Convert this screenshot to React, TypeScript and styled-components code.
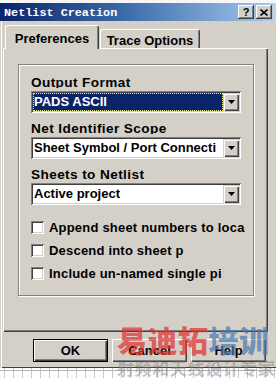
import React from "react";
import styled, { createGlobalStyle, css } from "styled-components";

const FACE = "#d4d0c8";
const SHADOW = "#808080";
const DARK = "#404040";
const UI_FONT = `"Liberation Sans", Arial, sans-serif`;

const GlobalStyle = createGlobalStyle`
  html, body { margin: 0; padding: 0; }
  body { background: #fff; font-family: ${UI_FONT}; }
`;

const Screen = styled.div`
  position: relative;
  width: 276px;
  height: 378px;
  overflow: hidden;
  display: flex;
  flex-direction: column;
  background: #fafafa;
`;

const TopStrip = styled.div`
  height: 3px;
  background: #f6f6f6;
`;

const Window = styled.div`
  height: 365px;
  display: flex;
  flex-direction: column;
  background: ${FACE};
  box-shadow: inset 0 -1px 0 ${DARK};
`;

const TitleBar = styled.div`
  height: 18px;
  margin-right: 3px;
  padding: 0 1px 0 4px;
  display: flex;
  align-items: center;
  background: linear-gradient(to right, #0a246a 0%, #3a6aa8 45%, #a6caf0 100%);
`;

const TitleText = styled.span`
  font-family: "Liberation Mono", "DejaVu Sans Mono", monospace;
  font-weight: bold;
  font-size: 11.8px;
  line-height: 18px;
  color: #fff;
  padding-top: 1px;
`;

const CaptionButtons = styled.div`
  margin-left: auto;
  display: flex;
  gap: 2px;
`;

const CaptionButton = styled.div`
  width: 16px;
  height: 14px;
  box-sizing: border-box;
  background: ${FACE};
  box-shadow: inset -1px -1px 0 ${DARK}, inset 1px 1px 0 #fff,
    inset -2px -2px 0 ${SHADOW};
  display: flex;
  align-items: center;
  justify-content: center;
  font-family: ${UI_FONT};
  font-weight: bold;
  font-size: 11px;
  line-height: 14px;
  color: #000;
`;

const Body = styled.div`
  flex: 1;
  display: flex;
  flex-direction: column;
  padding: 4px 0 0 3px;
  box-shadow: inset 1px 0 0 ${FACE}, inset 2px 0 0 #fff;
`;

const TabStrip = styled.div`
  position: relative;
  z-index: 1;
  height: 24px;
  margin-bottom: -1px;
  display: flex;
  align-items: flex-end;
`;

const Tab = styled.div<{ $active?: boolean; $width: number }>`
  width: ${(p) => p.$width}px;
  box-sizing: border-box;
  background: ${FACE};
  border-radius: 3px 3px 0 0;
  border-top: 1px solid #fff;
  border-left: 1px solid #fff;
  border-right: 1px solid ${DARK};
  box-shadow: inset -1px 0 0 ${SHADOW};
  font-family: ${UI_FONT};
  font-weight: bold;
  font-size: 13px;
  line-height: 15px;
  color: #000;
  text-align: center;
  ${(p) =>
    p.$active
      ? css`
          height: 24px;
          margin-left: 2px;
          padding-top: 5px;
        `
      : css`
          height: 19px;
          margin-left: 1px;
          margin-bottom: 1px;
          padding-top: 3px;
        `}
`;

const Panel = styled.div`
  width: 265px;
  height: 284px;
  box-sizing: border-box;
  padding: 16px 0 0 15px;
  box-shadow: inset 1px 1px 0 #fff, inset -1px -1px 0 ${DARK},
    inset -2px -2px 0 ${SHADOW};
`;

const GroupBox = styled.div`
  width: 236px;
  height: 232px;
  box-sizing: border-box;
  border: 1px solid ${SHADOW};
  box-shadow: inset 1px 1px 0 #fff, 1px 1px 0 #fff;
  padding: 11px 0 0 12px;
  display: flex;
  flex-direction: column;
  overflow: hidden;
`;

const FieldLabel = styled.div`
  height: 12px;
  margin-bottom: 3px;
  overflow: hidden;
  font-family: ${UI_FONT};
  font-weight: bold;
  font-size: 13.6px;
  letter-spacing: 0.4px;
  line-height: 13px;
  color: #000;
  white-space: nowrap;
`;

const Combo = styled.div`
  width: 210px;
  height: 22px;
  margin-bottom: 9px;
  box-sizing: border-box;
  padding: 2px;
  display: flex;
  background: #fff;
  box-shadow: inset 1px 1px 0 ${SHADOW}, inset -1px -1px 0 #fff,
    inset 2px 2px 0 ${DARK}, inset -2px -2px 0 ${FACE};
`;

const ComboValue = styled.div<{ $selected?: boolean }>`
  flex: 1;
  min-width: 0;
  overflow: hidden;
  white-space: nowrap;
  box-sizing: border-box;
  padding: 0 0 0 1px;
  font-family: ${UI_FONT};
  font-weight: bold;
  font-size: 13px;
  line-height: 17px;
  ${(p) =>
    p.$selected
      ? css`
          background: #0a246a;
          color: #fff;
          outline: 1px dotted #e8e890;
          outline-offset: -1px;
        `
      : css`
          color: #000;
        `}
`;

const DropButton = styled.div`
  width: 16px;
  height: 18px;
  flex: none;
  box-sizing: border-box;
  background: ${FACE};
  box-shadow: inset 1px 1px 0 ${FACE}, inset 2px 2px 0 #fff,
    inset -1px -1px 0 ${DARK}, inset -2px -2px 0 ${SHADOW};
  display: flex;
  align-items: center;
  justify-content: center;
`;

const CheckList = styled.div`
  margin-top: 5px;
  display: flex;
  flex-direction: column;
  gap: 6px;
`;

const CheckRow = styled.div`
  height: 17px;
  display: flex;
  align-items: center;
  gap: 5px;
`;

const CheckBox = styled.div`
  width: 13px;
  height: 13px;
  flex: none;
  box-sizing: border-box;
  background: #fff;
  box-shadow: inset 1px 1px 0 ${SHADOW}, inset -1px -1px 0 #fff,
    inset 2px 2px 0 ${DARK}, inset -2px -2px 0 ${FACE};
`;

const CheckLabel = styled.span`
  font-family: ${UI_FONT};
  font-weight: bold;
  font-size: 13px;
  letter-spacing: 0.2px;
  line-height: 15px;
  color: #000;
  white-space: nowrap;
`;

const ButtonRow = styled.div`
  margin-top: 7px;
  padding-right: 10px;
  display: flex;
  justify-content: flex-end;
  gap: 4px;
`;

const Button = styled.div<{ $default?: boolean }>`
  width: 75px;
  height: 23px;
  box-sizing: border-box;
  background: ${FACE};
  display: flex;
  align-items: center;
  justify-content: center;
  font-family: ${UI_FONT};
  font-weight: bold;
  font-size: 13px;
  line-height: 15px;
  color: #000;
  box-shadow: inset 1px 1px 0 #fff, inset -1px -1px 0 ${DARK},
    inset -2px -2px 0 ${SHADOW};
  ${(p) =>
    p.$default &&
    css`
      border: 1px solid #000;
    `}
`;

const BottomGrid = styled.div`
  flex: 1;
  background-color: #fdfdfd;
  background-image: linear-gradient(
      to bottom,
      transparent 2px,
      #b4b4c0 2px,
      #b4b4c0 3px,
      transparent 3px
    ),
    repeating-linear-gradient(
      to right,
      transparent 0 4px,
      #c8c8d0 4px 5px,
      transparent 5px 9px
    );
`;

const Watermark = styled.div`
  position: absolute;
  left: 117px;
  top: 322px;
  display: flex;
  flex-direction: column;
  pointer-events: none;
  font-family: "Noto Sans CJK SC", sans-serif;
  font-weight: 900;
`;

const WatermarkTitle = styled.div`
  font-size: 30px;
  line-height: 34px;
  letter-spacing: 0.5px;
  white-space: nowrap;
`;

const WmPart = styled.span<{ $tone: "red" | "blue" }>`
  color: ${(p) =>
    p.$tone === "red" ? "rgba(222, 52, 48, 0.72)" : "rgba(70, 120, 178, 0.7)"};
`;

const WatermarkSub = styled.div`
  font-size: 17px;
  line-height: 20px;
  margin-top: 2px;
  letter-spacing: 0.6px;
  white-space: nowrap;
  font-weight: 700;
  color: rgba(120, 120, 120, 0.42);
`;

const Arrow = () => (
  <svg width="7" height="4" viewBox="0 0 7 4">
    <path d="M0 0H7L3.5 4Z" fill="#000" />
  </svg>
);

const CloseGlyph = () => (
  <svg width="8" height="7" viewBox="0 0 8 7">
    <path d="M0.5 0.5L7.5 6.5M7.5 0.5L0.5 6.5" stroke="#000" strokeWidth="1.6" />
  </svg>
);

const fields = [
  { label: "Output Format", value: "PADS ASCII", selected: true },
  { label: "Net Identifier Scope", value: "Sheet Symbol / Port Connecti" },
  { label: "Sheets to Netlist", value: "Active project" },
];

const checks = [
  "Append sheet numbers to loca",
  "Descend into sheet p",
  "Include un-named single pi",
];

export default function App() {
  return (
    <>
      <GlobalStyle />
      <Screen>
        <TopStrip />
        <Window>
          <TitleBar>
            <TitleText>Netlist Creation</TitleText>
            <CaptionButtons>
              <CaptionButton>?</CaptionButton>
              <CaptionButton>
                <CloseGlyph />
              </CaptionButton>
            </CaptionButtons>
          </TitleBar>
          <Body>
            <TabStrip>
              <Tab $active $width={94}>
                Preferences
              </Tab>
              <Tab $width={100}>Trace Options</Tab>
            </TabStrip>
            <Panel>
              <GroupBox>
                {fields.map((f) => (
                  <React.Fragment key={f.label}>
                    <FieldLabel>{f.label}</FieldLabel>
                    <Combo>
                      <ComboValue $selected={f.selected}>{f.value}</ComboValue>
                      <DropButton>
                        <Arrow />
                      </DropButton>
                    </Combo>
                  </React.Fragment>
                ))}
                <CheckList>
                  {checks.map((c) => (
                    <CheckRow key={c}>
                      <CheckBox />
                      <CheckLabel>{c}</CheckLabel>
                    </CheckRow>
                  ))}
                </CheckList>
              </GroupBox>
            </Panel>
            <ButtonRow>
              <Button $default>OK</Button>
              <Button>Cancel</Button>
              <Button>Help</Button>
            </ButtonRow>
          </Body>
        </Window>
        <BottomGrid />
        <Watermark>
          <WatermarkTitle>
            <WmPart $tone="red">易迪拓</WmPart>
            <WmPart $tone="blue">培训</WmPart>
          </WatermarkTitle>
          <WatermarkSub>射频和天线设计专家</WatermarkSub>
        </Watermark>
      </Screen>
    </>
  );
}
